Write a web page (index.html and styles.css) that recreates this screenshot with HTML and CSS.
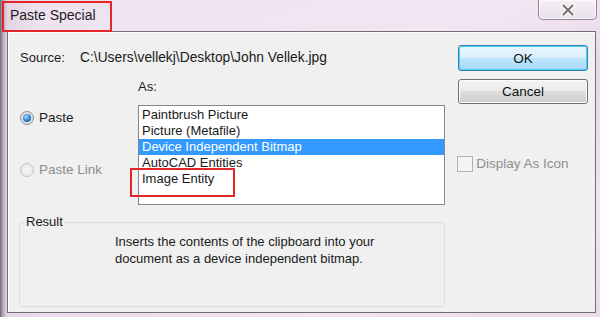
FILE: index.html
```html
<!DOCTYPE html>
<html lang="en">
<head>
    <meta charset="UTF-8">
    <title>Paste Special</title>
    <link rel="stylesheet" href="styles.css">
</head>
<body>
    <div class="window">
        <div class="titlebar">
            <span class="title mark">Paste Special</span>
            <button class="close-btn" aria-label="Close">
                <svg width="22" height="14" viewBox="0 0 22 14">
                    <path d="M6.5 2.5 L15.5 11.5 M15.5 2.5 L6.5 11.5" stroke="#fff" stroke-width="4.5" stroke-linecap="round"/>
                    <path d="M6.5 2.5 L15.5 11.5 M15.5 2.5 L6.5 11.5" stroke="#777" stroke-width="2.2" stroke-linecap="round"/>
                </svg>
            </button>
        </div>

        <div class="panel">
            <div class="main-col">
                <div class="source-row">
                    <span class="source-label">Source:</span>
                    <span class="source-path">C:\Users\vellekj\Desktop\John Vellek.jpg</span>
                </div>

                <div class="options-row">
                    <div class="radio-col">
                        <label class="radio checked"><span class="radio-dot"></span>Paste</label>
                        <label class="radio disabled"><span class="radio-dot"></span>Paste Link</label>
                    </div>
                    <div class="list-col">
                        <div class="as-label">As:</div>
                        <div class="listbox">
                            <div class="list-item">Paintbrush Picture</div>
                            <div class="list-item">Picture (Metafile)</div>
                            <div class="list-item selected">Device Independent Bitmap</div>
                            <div class="list-item">AutoCAD Entities</div>
                            <div class="list-item">Image Entity</div>
                            <!-- annotation box drawn over the list -->
                            <div class="item-mark"></div>
                        </div>
                    </div>
                </div>

                <fieldset class="result">
                    <legend>Result</legend>
                    <p>Inserts the contents of the clipboard into your<br>document as a device independent bitmap.</p>
                </fieldset>
            </div>

            <div class="side-col">
                <button class="btn btn-default">OK</button>
                <button class="btn">Cancel</button>
                <label class="check disabled"><span class="check-box"></span>Display As Icon</label>
            </div>
        </div>
    </div>
</body>
</html>
```

FILE: styles.css
```css
html, body {
    margin: 0;
    height: 100%;
}
body {
    font-family: "Liberation Sans", Arial, sans-serif;
    font-size: 13px;
    color: #1a1a1a;
    background:
        linear-gradient(to right, #6e6670 0, #b8aab8 3px, #e4d4e4 7px, rgba(236,222,238,0) 40px),
        linear-gradient(160deg, #efe2f0 0%, #f3e6f3 35%, #e8d8ea 55%, #f2e4f2 80%, #eadbea 100%);
    overflow: hidden;
}
.window {
    width: 600px;
    height: 317px;
}
.titlebar {
    display: flex;
    align-items: flex-start;
    height: 31px;
}
.title {
    margin: 1px 0 0 2px;
    padding: 4px 14px 0 6px;
    height: 23px;
    font-size: 14px;
    color: #1e1e1e;
}
.mark {
    border: 2px solid #e2262a;
}
.close-btn {
    margin-left: auto;
    margin-right: 3px;
    width: 59px;
    height: 20px;
    border: 1px solid #8f8a92;
    border-top: none;
    border-radius: 0 0 5px 5px;
    background: linear-gradient(#f6f0f6, #e9e0ea);
    box-shadow: inset 0 0 0 1px rgba(255,255,255,0.7);
    display: flex;
    align-items: center;
    justify-content: center;
    padding: 0;
}
.panel {
    display: flex;
    margin-left: 7px;
    width: 589px;
    height: 282px;
    box-sizing: border-box;
    background: #f0f0f0;
    border: 1px solid #6f6f6f;
    box-shadow: inset 1px 1px 0 #ffffff;
}
.main-col {
    padding-left: 12px;
    width: 438px;
}
.source-row {
    display: flex;
    margin-top: 18px;
    line-height: 16px;
}
.source-label {
    width: 60px;
}
.source-path {
    font-size: 13.8px;
}
.options-row {
    display: flex;
    margin-top: 13px;
}
.radio-col {
    width: 118px;
    padding-top: 31px;
    display: flex;
    flex-direction: column;
    gap: 36px;
}
.radio {
    display: flex;
    align-items: center;
    line-height: 16px;
    height: 16px;
    font-size: 13.5px;
}
.radio-dot {
    width: 12px;
    height: 12px;
    border: 1px solid #8e8f8f;
    border-radius: 50%;
    margin-right: 5px;
    background: radial-gradient(circle, #f4f4f4 0, #d4d4d4 100%);
    display: flex;
    align-items: center;
    justify-content: center;
}
.checked .radio-dot::after {
    content: "";
    width: 8px;
    height: 8px;
    border-radius: 50%;
    background: radial-gradient(circle at 40% 35%, #a6e0ff 0, #2a7bd0 55%, #0b3c82 100%);
}
.disabled {
    color: #8d8d8d;
}
.disabled .radio-dot {
    border-color: #c4c4c4;
    background: radial-gradient(circle, #f6f6f6 0, #e4e4e4 100%);
}
.as-label {
    line-height: 16px;
    margin-bottom: 10px;
}
.listbox {
    position: relative;
    width: 307px;
    height: 100px;
    box-sizing: border-box;
    background: #ffffff;
    border: 1px solid #828790;
    padding-top: 1px;
}
.list-item {
    height: 16px;
    line-height: 16px;
    padding-left: 3px;
    white-space: nowrap;
}
.list-item.selected {
    background: #3399ff;
    color: #ffffff;
}
.item-mark {
    position: absolute;
    left: -9px;
    top: 62px;
    width: 101px;
    height: 25px;
    border: 2px solid #e2262a;
}
.result {
    margin: 9px 0 0 -1px;
    padding: 3px 0 39px 0;
    width: 426px;
    box-sizing: border-box;
    border: 1px solid #d5dfe5;
    border-radius: 3px;
}
.result legend {
    padding: 0 1px;
    margin-left: 5px;
    line-height: 16px;
}
.result p {
    margin: 0;
    padding-left: 95px;
    line-height: 17px;
}
.side-col {
    margin-left: auto;
    margin-right: 7px;
    width: 131px;
    padding-top: 13px;
    display: flex;
    flex-direction: column;
    align-items: flex-end;
}
.btn {
    width: 130px;
    height: 25px;
    font-family: inherit;
    font-size: 13.5px;
    color: #111;
    border: 1px solid #707070;
    border-radius: 3px;
    background: linear-gradient(#f2f2f2 0%, #ebebeb 49%, #dddddd 50%, #cfcfcf 100%);
    box-shadow: inset 0 0 0 1px #fcfcfc;
    margin-bottom: 8px;
    padding: 0;
}
.btn-default {
    height: 26px;
    border-color: #3c7fb1;
    background: linear-gradient(#eaf6fd 0%, #d9f0fc 49%, #bee6fd 50%, #a7d9f5 100%);
    box-shadow: inset 0 0 0 1px #48d0f5;
}
.check {
    align-self: flex-start;
    display: flex;
    align-items: center;
    margin-top: 44px;
    font-size: 13.5px;
    line-height: 16px;
}
.check-box {
    width: 14px;
    height: 14px;
    border: 1px solid #b1b1b1;
    background: #f4f4f4;
    margin-right: 3px;
}
```
